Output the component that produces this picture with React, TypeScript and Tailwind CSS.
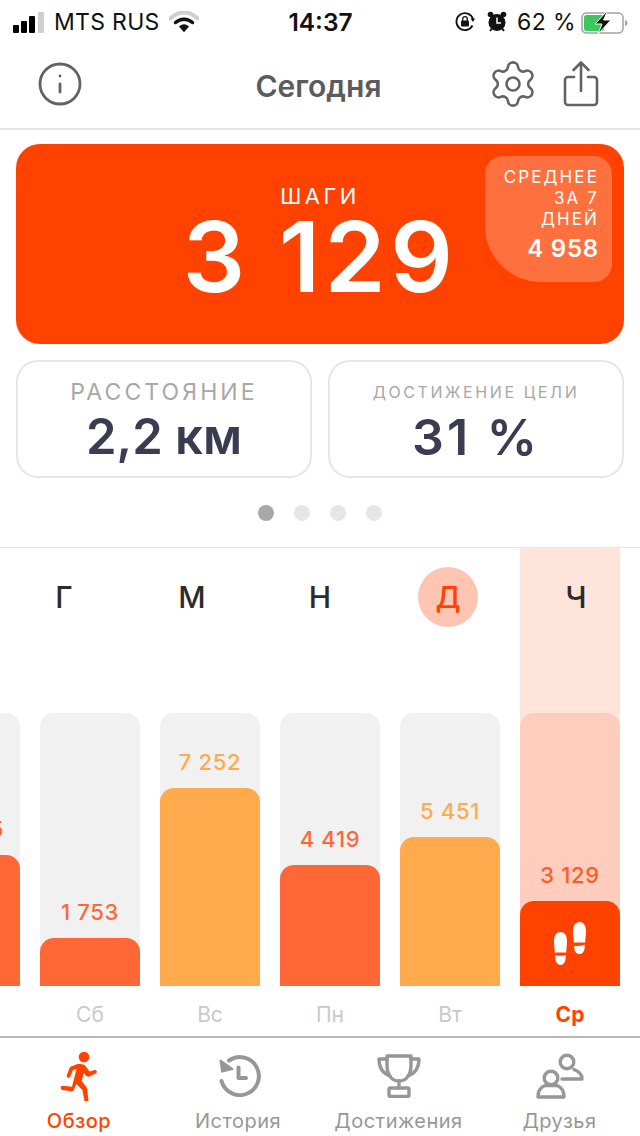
import React from 'react';
import { Info, Settings } from 'lucide-react';

const font = "font-['Inter','Noto_Sans',sans-serif]";

const letters = ['Г', 'М', 'Н', 'Д', 'Ч'];

const days = [
  { label: '', value: '\u20094 785', height: 131, color: 'bg-[#ff6736]', text: 'text-[#ff6736]' },
  { label: 'Сб', value: '1 753', height: 48, color: 'bg-[#ff6736]', text: 'text-[#ff6736]' },
  { label: 'Вс', value: '7 252', height: 198, color: 'bg-[#ffaa4d]', text: 'text-[#ffaa4d]' },
  { label: 'Пн', value: '4 419', height: 121, color: 'bg-[#ff6736]', text: 'text-[#ff6736]' },
  { label: 'Вт', value: '5 451', height: 149, color: 'bg-[#ffaa4d]', text: 'text-[#ffaa4d]' },
];

function ShareIcon() {
  return (
    <svg width="36" height="48" viewBox="0 0 36 48" fill="none" stroke="#636366" strokeWidth="2.6" strokeLinecap="round" strokeLinejoin="round">
      <path d="M11 17H5a3 3 0 0 0-3 3v22a3 3 0 0 0 3 3h26a3 3 0 0 0 3-3V20a3 3 0 0 0-3-3h-6" />
      <path d="M18 31V3M10.5 10 18 2.500l7.500 7.500" />
    </svg>
  );
}

function Feet() {
  return (
    <svg width="32" height="43" viewBox="0 0 32 43" fill="white">
      <path d="M6.500 10c4.500 0 6.500 4 6.500 9 0 4-.6 7-.8 11.500H.8C.6 26 0 23 0 19c0-5 2-9 6.500-9Z" />
      <path d="M1.200 33.200c3.500.8 7 .8 10.600 0C12 39 10 43 6.500 43S1 39 1.200 33.200Z" />
      <path d="M25.500 0C30 0 32 4 32 9c0 4-.6 7-.8 11.500H19.800C19.600 16 19 13 19 9c0-5 2-9 6.500-9Z" />
      <path d="M20.200 23.700c3.500.6 7 .1 10.600-1C31 28.500 29 32 25.500 32s-5.500-3-5.300-8.300Z" />
    </svg>
  );
}

function Runner() {
  return (
    <svg width="38" height="50" viewBox="0 0 38 50" fill="#ff4200">
      <circle cx="24" cy="6" r="5.300" />
      <path d="M14 14.500c4-2 9.500-2 12 1l3.500 5 5-1.500c2.300-.6 3.300 2.300 1.200 3.400l-6.500 3c-1.300.6-2.500.2-3.300-.8l-2-2.600-2.200 8 4.800 6.200c.5.600.6 1.200.7 2l1.200 11c.2 2.800-3.500 3.200-4 .5l-2-10.700-6-6-2.500 5.800c-.5 1.100-1.500 1.600-2.600 1.500L2.500 39C-.5 38.300.2 34.500 3 34.800l9 1 4.500-17.800-3.700 1.300-2.300 6c-1 2.600-4.600 1.500-3.600-1.200l2.600-7c.6-1.300 2-2 4.500-2.600Z" />
    </svg>
  );
}

function History() {
  return (
    <svg width="42" height="42" viewBox="0 0 42 42" fill="none" stroke="#979797" strokeLinecap="round" strokeLinejoin="round">
      <path d="M10 5.500A19 19 0 1 1 2.500 26" strokeWidth="4" />
      <path d="M1.500 5.500 3 16.500 13.500 14Z" fill="#979797" strokeWidth="2" />
      <path d="M19.500 12.500V23H27" strokeWidth="4" />
    </svg>
  );
}

function Trophy() {
  return (
    <svg width="44" height="44" viewBox="0 0 44 44" fill="none" stroke="#979797" strokeWidth="3.400" strokeLinecap="round" strokeLinejoin="round">
      <path d="M10 2h24v9c0 9-4 16-12 16S10 20 10 11V2Z" />
      <path d="M10 5H2c0 8 3 14 11 17M34 5h8c0 8-3 14-11 17" />
      <path d="M22 27v7" />
      <rect x="12" y="34" width="20" height="8.500" rx="1.500" />
    </svg>
  );
}

function Friends() {
  return (
    <svg width="48" height="46" viewBox="0 0 48 46" fill="none" stroke="#979797" strokeWidth="3.400" strokeLinecap="round" strokeLinejoin="round">
      <circle cx="31" cy="9" r="6.800" />
      <path d="M26 26h20c0-5-4-8-8-9.500" />
      <circle cx="15" cy="25" r="6.800" />
      <path d="M2 44c0-6 3-10 7-11.500h12c4 1.500 7 5.500 7 11.500H2Z" />
    </svg>
  );
}

function StatusBar() {
  return (
    <div className="flex h-[44px] items-center justify-between pl-[13px] pr-[12px] text-[23px] leading-none text-[#111]">
      <div className="flex flex-1 items-center">
        <div className="flex items-end gap-[2px]">
          <span className="h-[8px] w-[6px] rounded-[1px] bg-black" />
          <span className="h-[12px] w-[6px] rounded-[1px] bg-black" />
          <span className="h-[17px] w-[6px] rounded-[1px] bg-black" />
          <span className="ml-[1px] h-[21px] w-[6px] rounded-[1px] bg-[#cfcfcf]" />
        </div>
        <span className="ml-[10px] tracking-[0.300px]">MTS RUS</span>
        <svg className="ml-[9px]" width="30" height="22" viewBox="0 0 30 22" fill="none" strokeLinecap="round">
          <path d="M1.500 7.500C9.500-.5 20.500-.5 28.500 7.500" stroke="#cfcfcf" strokeWidth="4" />
          <path d="M6.500 11.500c5-4.500 12-4.500 17 0" stroke="#111" strokeWidth="3.500" />
          <path d="M11 15.500c2.500-2 5.500-2 8 0L15 20Z" fill="#111" stroke="#111" strokeWidth="1.500" />
        </svg>
      </div>
      <span className="w-[120px] text-center text-[24.500px] font-semibold">14:37</span>
      <div className="flex flex-1 items-center justify-end">
        <svg width="22" height="22" viewBox="0 0 22 22" fill="none" stroke="#111" strokeWidth="1.800">
          <path d="M18.500 14.500A8.500 8.500 0 1 1 19 8" />
          <path d="M16.500 7.500h4.500L19 11Z" fill="#111" stroke="none" />
          <rect x="7" y="9.500" width="8" height="6" rx="1" fill="#111" stroke="none" />
          <path d="M8.700 10V8a2.300 2.300 0 0 1 4.600 0v2" strokeWidth="1.300" />
        </svg>
        <svg className="ml-[11px]" width="20" height="22" viewBox="0 0 20 22" fill="#111">
          <circle cx="10" cy="11.500" r="8.500" />
          <circle cx="3.500" cy="3.500" r="2.800" />
          <circle cx="16.500" cy="3.500" r="2.800" />
          <path d="M10 6.500v5.500h4" fill="none" stroke="#fff" strokeWidth="1.500" />
          <path d="m3 20 2-2.500M17 20l-2-2.500" stroke="#111" strokeWidth="2" />
        </svg>
        <span className="ml-[10px] tracking-[0.400px]">62 %</span>
        <svg className="ml-[5px]" width="47" height="24" viewBox="0 0 47 24" fill="none">
          <rect x="1" y="3" width="41" height="20" rx="4.500" stroke="#a3a3a3" strokeWidth="1.500" />
          <rect x="3" y="5" width="20" height="16" rx="2.500" fill="#3bc75c" />
          <path d="M44 10v6c1.500-.5 2.500-1.500 2.500-3s-1-2.500-2.500-3Z" fill="#a3a3a3" />
          <path d="M27 0 14 14h7l-4 10 13-14h-7.500Z" fill="#111" stroke="#fff" strokeWidth="1" />
        </svg>
      </div>
    </div>
  );
}

function Header() {
  return (
    <div className="flex h-[86px] items-center justify-between border-b-2 border-[#e5e5e5] pb-[4px] pl-[36px] pr-[41px]">
      <Info size={48} strokeWidth={1.400} color="#636366" />
      <div className="pl-[66px] pt-[4px] text-[30px] font-semibold text-[#5b5b5e]">Сегодня</div>
      <div className="flex items-center gap-[24px]">
        <Settings size={52} strokeWidth={1.200} color="#636366" />
        <ShareIcon />
      </div>
    </div>
  );
}

function StepsCard() {
  return (
    <div className="relative mx-[16px] mt-[14px] flex h-[200px] flex-col items-center rounded-[24px] bg-[#ff4200] pt-[38px] text-white">
      <div className="text-[22px] leading-[28px] tracking-[3.500px]">ШАГИ</div>
      <div className="text-[98px] font-semibold leading-[94px] tracking-[4.500px]">3 129</div>
      <div className="absolute right-[12px] top-[12px] flex h-[126px] w-[127px] flex-col items-end rounded-[18px] rounded-bl-[56px] bg-[#ff703f] pr-[13px] pt-[11px] text-right">
        <div className="text-[17px] leading-[21px] tracking-[2.100px]">СРЕДНЕЕ<br />ЗА 7<br />ДНЕЙ</div>
        <div className="mt-[3px] text-[24px] font-semibold leading-[32px] tracking-[0.800px]">4 958</div>
      </div>
    </div>
  );
}

function Stats() {
  return (
    <div className="mx-[16px] mt-[16px] flex gap-[16px]">
      <div className="flex h-[118px] flex-1 flex-col items-center rounded-[22px] border-2 border-[#e6e6e6] pt-[16px]">
        <div className="text-[23px] leading-[28px] tracking-[3.100px] text-[#a8a8a8]">РАССТОЯНИЕ</div>
        <div className="mt-[2px] text-[49px] font-semibold leading-[58px] text-[#3b3b51]">2,2 км</div>
      </div>
      <div className="flex h-[118px] flex-1 flex-col items-center rounded-[22px] border-2 border-[#e6e6e6] pt-[16px]">
        <div className="text-[16px] leading-[28px] tracking-[2.600px] text-[#a8a8a8]">ДОСТИЖЕНИЕ ЦЕЛИ</div>
        <div className="mt-[2px] text-[50px] font-semibold leading-[58px] tracking-[3px] text-[#3b3b51]">31 %</div>
      </div>
    </div>
  );
}

function Dots() {
  return (
    <div className="mt-[27px] flex h-[16px] justify-center gap-[20px] pr-[1px]">
      <span className="h-[16px] w-[16px] rounded-full bg-[#a8a8a8]" />
      <span className="h-[16px] w-[16px] rounded-full bg-[#e6e6e6]" />
      <span className="h-[16px] w-[16px] rounded-full bg-[#e6e6e6]" />
      <span className="h-[16px] w-[16px] rounded-full bg-[#e6e6e6]" />
    </div>
  );
}

function Chart() {
  return (
    <div className="relative mt-[26px] h-[489px] overflow-hidden border-t border-[#e5e5e5]">
      {/* today's column sits behind the letters and the bar's rounded corners */}
      <div className="absolute left-[520px] top-0 h-[185px] w-[100px] bg-[#ffe4dc]" />
      <div className="relative grid h-[165px] grid-cols-5 pt-[19px]">
        {letters.map(l => (
          <div key={l} className="flex justify-center">
            <div className={`flex h-[60px] w-[60px] items-center justify-center rounded-full text-[30px] font-medium ${l === 'Д' ? 'bg-[#ffc5b3] font-bold text-[#ff4200]' : 'text-[#2b2b2b]'}`}>
              {l}
            </div>
          </div>
        ))}
      </div>
      <div className="relative -ml-[80px] flex gap-[20px]">
        {days.map(d => (
          <div key={d.value} className="w-[100px] shrink-0">
            <div className="flex h-[273px] flex-col justify-end overflow-hidden rounded-t-[14px] bg-[#f1f1f1]">
              <div className={`mb-[9px] whitespace-nowrap text-center text-[22px] font-medium leading-[34px] tracking-[0.700px] ${d.text}`}>{d.value}</div>
              <div className={`rounded-t-[14px] ${d.color}`} style={{ height: d.height }} />
            </div>
            <div className="pt-[16px] text-center text-[21px] leading-[26px] text-[#c9c9c9]">{d.label}</div>
          </div>
        ))}
        <div className="w-[100px] shrink-0">
          <div className="flex h-[273px] flex-col justify-end overflow-hidden rounded-t-[14px] bg-[#ffcdbd]">
            <div className="mb-[9px] text-center text-[22px] font-medium leading-[34px] tracking-[0.700px] text-[#ff5a26]">3 129</div>
            <div className="flex h-[85px] items-center justify-center rounded-t-[14px] bg-[#ff4200]">
              <Feet />
            </div>
          </div>
          <div className="pt-[16px] text-center text-[21px] font-bold leading-[26px] text-[#ff4200]">Ср</div>
        </div>
      </div>
    </div>
  );
}

const tabs = [
  { label: 'Обзор', icon: <Runner />, active: true, w: 'w-[158px]', shift: '' },
  { label: 'История', icon: <History />, active: false, w: 'w-[160px]', shift: 'ml-[3px]' },
  { label: 'Достижения', icon: <Trophy />, active: false, w: 'w-[161px]', shift: '' },
  { label: 'Друзья', icon: <Friends />, active: false, w: 'w-[161px]', shift: '' },
];

function TabBar() {
  return (
    <div className="flex h-[99px] border-t-2 border-[#b8b8b8]">
      {tabs.map(t => (
        <div key={t.label} className={`flex flex-col items-center pt-[12px] ${t.w}`}>
          <div className={`flex h-[52px] items-center ${t.shift}`}>{t.icon}</div>
          <div className={`mt-[6px] text-[20px] leading-[26px] tracking-[0.500px] ${t.active ? 'font-medium text-[#ff4200]' : 'text-[#979797]'}`}>{t.label}</div>
        </div>
      ))}
    </div>
  );
}

export default function App() {
  return (
    <div className={`h-[1136px] w-[640px] overflow-hidden bg-white ${font}`}>
      <StatusBar />
      <Header />
      <StepsCard />
      <Stats />
      <Dots />
      <Chart />
      <TabBar />
    </div>
  );
}
